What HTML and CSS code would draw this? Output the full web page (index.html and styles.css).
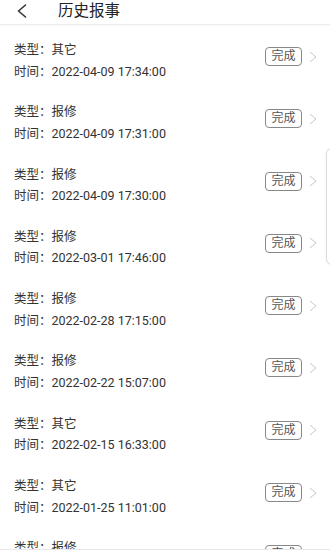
FILE: index.html
```html
<!DOCTYPE html>
<html lang="zh">
<head>
<meta charset="utf-8">
<link rel="stylesheet" href="styles.css">
</head>
<body>
<header class="bar">
  <svg class="back" width="12" height="14" viewBox="0 0 12 14"><path d="M9.5 1 L2.5 7 L9.5 13" fill="none" stroke="#333" stroke-width="1.6" stroke-linecap="round" stroke-linejoin="round"/></svg>
  <h1 class="title">历史报事</h1>
</header>
<main class="list">
  <div class="item"><div class="info"><div>类型：其它</div><div>时间：2022-04-09 17:34:00</div></div><div class="side"><span class="badge">完成</span><svg class="arrow" width="8" height="12" viewBox="0 0 8 12"><path d="M1 1 L7 6 L1 11" fill="none" stroke="#c8c8c8" stroke-width="1"/></svg></div></div>
  <div class="item"><div class="info"><div>类型：报修</div><div>时间：2022-04-09 17:31:00</div></div><div class="side"><span class="badge">完成</span><svg class="arrow" width="8" height="12" viewBox="0 0 8 12"><path d="M1 1 L7 6 L1 11" fill="none" stroke="#c8c8c8" stroke-width="1"/></svg></div></div>
  <div class="item"><div class="info"><div>类型：报修</div><div>时间：2022-04-09 17:30:00</div></div><div class="side"><span class="badge">完成</span><svg class="arrow" width="8" height="12" viewBox="0 0 8 12"><path d="M1 1 L7 6 L1 11" fill="none" stroke="#c8c8c8" stroke-width="1"/></svg></div></div>
  <div class="item"><div class="info"><div>类型：报修</div><div>时间：2022-03-01 17:46:00</div></div><div class="side"><span class="badge">完成</span><svg class="arrow" width="8" height="12" viewBox="0 0 8 12"><path d="M1 1 L7 6 L1 11" fill="none" stroke="#c8c8c8" stroke-width="1"/></svg></div></div>
  <div class="item"><div class="info"><div>类型：报修</div><div>时间：2022-02-28 17:15:00</div></div><div class="side"><span class="badge">完成</span><svg class="arrow" width="8" height="12" viewBox="0 0 8 12"><path d="M1 1 L7 6 L1 11" fill="none" stroke="#c8c8c8" stroke-width="1"/></svg></div></div>
  <div class="item"><div class="info"><div>类型：报修</div><div>时间：2022-02-22 15:07:00</div></div><div class="side"><span class="badge">完成</span><svg class="arrow" width="8" height="12" viewBox="0 0 8 12"><path d="M1 1 L7 6 L1 11" fill="none" stroke="#c8c8c8" stroke-width="1"/></svg></div></div>
  <div class="item"><div class="info"><div>类型：其它</div><div>时间：2022-02-15 16:33:00</div></div><div class="side"><span class="badge">完成</span><svg class="arrow" width="8" height="12" viewBox="0 0 8 12"><path d="M1 1 L7 6 L1 11" fill="none" stroke="#c8c8c8" stroke-width="1"/></svg></div></div>
  <div class="item"><div class="info"><div>类型：其它</div><div>时间：2022-01-25 11:01:00</div></div><div class="side"><span class="badge">完成</span><svg class="arrow" width="8" height="12" viewBox="0 0 8 12"><path d="M1 1 L7 6 L1 11" fill="none" stroke="#c8c8c8" stroke-width="1"/></svg></div></div>
  <div class="item"><div class="info"><div>类型：报修</div><div>时间：2022-01-20 10:00:00</div></div><div class="side"><span class="badge">完成</span><svg class="arrow" width="8" height="12" viewBox="0 0 8 12"><path d="M1 1 L7 6 L1 11" fill="none" stroke="#c8c8c8" stroke-width="1"/></svg></div></div>
</main>
<div class="sidetab"></div>
<div class="footer"></div>
</body>
</html>
```

FILE: styles.css
```css
html, body {
  margin: 0;
  padding: 0;
  background: #fff;
  overflow: hidden;
  height: 550px;
}
body {
  font-family: Roboto, "Noto Sans CJK SC", sans-serif;
  color: #333;
}
.bar {
  height: 25px;
  display: flex;
  align-items: center;
  border-bottom: 1px solid #ececec;
  box-shadow: 0 1px 2px rgba(0,0,0,0.04);
  box-sizing: border-box;
}
.back {
  margin-left: 16px;
  margin-top: -2px;
}
.title {
  margin: 0 0 0 30px;
  font-size: 15.5px;
  font-weight: normal;
  color: #222;
  line-height: 25px;
  margin-top: -1px;
}
.list {
  display: flex;
  flex-direction: column;
}
.item {
  height: 62.3px;
  box-sizing: border-box;
  padding: 14px 13px 0 14px;
  display: flex;
  justify-content: space-between;
  align-items: flex-start;
  flex-shrink: 0;
}
.info {
  font-size: 12.5px;
  line-height: 21.5px;
  color: #333;
}
.side {
  display: flex;
  align-items: center;
  margin-top: 8px;
}
.badge {
  width: 37px;
  height: 19px;
  box-sizing: border-box;
  border: 1px solid #888;
  border-radius: 4px;
  font-size: 12px;
  line-height: 17px;
  text-align: center;
  color: #555;
}
.arrow {
  margin-left: 7px;
}
.sidetab {
  position: fixed;
  left: 326px;
  top: 148px;
  width: 20px;
  height: 115px;
  border: 1px solid #dcdcdc;
  border-radius: 6px;
  background: #fff;
  box-shadow: 0 0 2px rgba(0,0,0,0.08);
}
.footer {
  position: fixed;
  left: 0;
  right: 0;
  top: 549px;
  height: 10px;
  background: #fff;
  border-top: 1px solid #e8e8e8;
}
```
